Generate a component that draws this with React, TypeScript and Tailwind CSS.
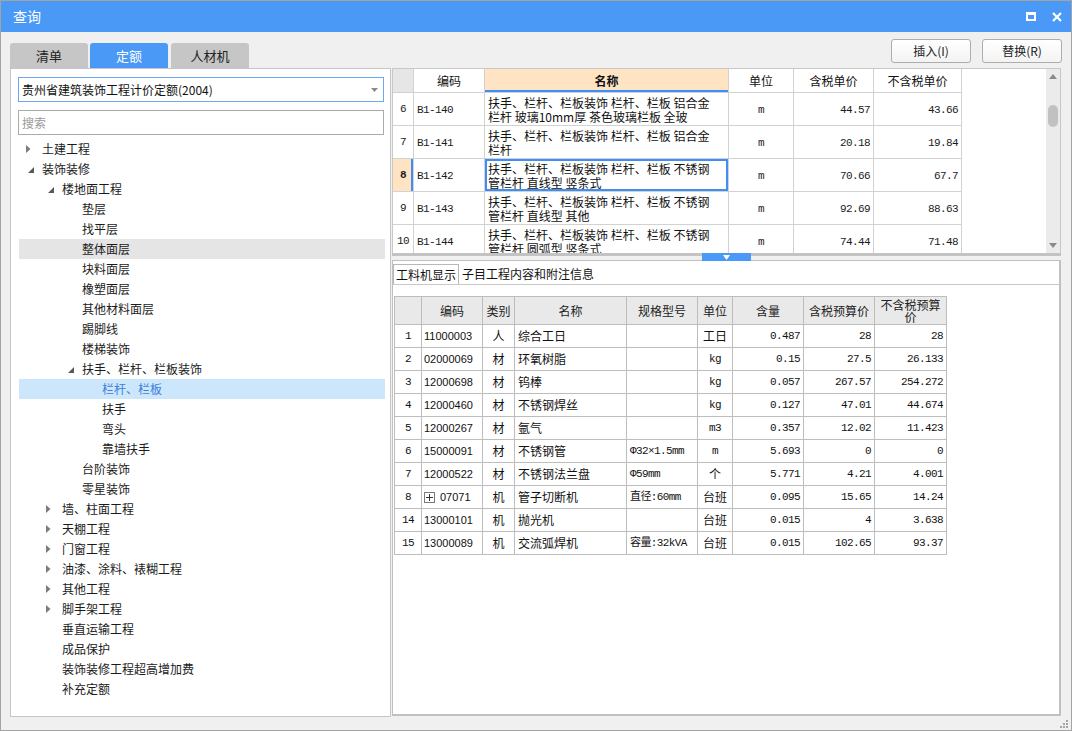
import type { ReactNode } from 'react';

// Query dialog: quota library tree on the left, quota list + resource breakdown on the right.

type TreeNode = {
  label: string;
  level: 0 | 1 | 2 | 3;
  arrow?: 'open' | 'closed';
  mark?: 'hover' | 'selected';
};

const TREE: TreeNode[] = [
  { label: '土建工程', level: 0, arrow: 'closed' },
  { label: '装饰装修', level: 0, arrow: 'open' },
  { label: '楼地面工程', level: 1, arrow: 'open' },
  { label: '垫层', level: 2 },
  { label: '找平层', level: 2 },
  { label: '整体面层', level: 2, mark: 'hover' },
  { label: '块料面层', level: 2 },
  { label: '橡塑面层', level: 2 },
  { label: '其他材料面层', level: 2 },
  { label: '踢脚线', level: 2 },
  { label: '楼梯装饰', level: 2 },
  { label: '扶手、栏杆、栏板装饰', level: 2, arrow: 'open' },
  { label: '栏杆、栏板', level: 3, mark: 'selected' },
  { label: '扶手', level: 3 },
  { label: '弯头', level: 3 },
  { label: '靠墙扶手', level: 3 },
  { label: '台阶装饰', level: 2 },
  { label: '零星装饰', level: 2 },
  { label: '墙、柱面工程', level: 1, arrow: 'closed' },
  { label: '天棚工程', level: 1, arrow: 'closed' },
  { label: '门窗工程', level: 1, arrow: 'closed' },
  { label: '油漆、涂料、裱糊工程', level: 1, arrow: 'closed' },
  { label: '其他工程', level: 1, arrow: 'closed' },
  { label: '脚手架工程', level: 1, arrow: 'closed' },
  { label: '垂直运输工程', level: 1 },
  { label: '成品保护', level: 1 },
  { label: '装饰装修工程超高增加费', level: 1 },
  { label: '补充定额', level: 1 },
];

const INDENT = ['pl-[7px]', 'pl-[27px]', 'pl-[47px]', 'pl-[67px]'];

const QUOTAS = [
  { no: '6', code: 'B1-140', name: ['扶手、栏杆、栏板装饰 栏杆、栏板 铝合金', '栏杆 玻璃10mm厚 茶色玻璃栏板 全玻'], unit: 'm', tax: '44.57', net: '43.66' },
  { no: '7', code: 'B1-141', name: ['扶手、栏杆、栏板装饰 栏杆、栏板 铝合金', '栏杆'], unit: 'm', tax: '20.18', net: '19.84' },
  { no: '8', code: 'B1-142', name: ['扶手、栏杆、栏板装饰 栏杆、栏板 不锈钢', '管栏杆 直线型 竖条式'], unit: 'm', tax: '70.66', net: '67.7', active: true },
  { no: '9', code: 'B1-143', name: ['扶手、栏杆、栏板装饰 栏杆、栏板 不锈钢', '管栏杆 直线型 其他'], unit: 'm', tax: '92.69', net: '88.63' },
  { no: '10', code: 'B1-144', name: ['扶手、栏杆、栏板装饰 栏杆、栏板 不锈钢', '管栏杆 圆弧型 竖条式'], unit: 'm', tax: '74.44', net: '71.48' },
];

const RESOURCES = [
  { no: '1', code: '11000003', kind: '人', name: '综合工日', spec: '', unit: '工日', qty: '0.487', tax: '28', net: '28' },
  { no: '2', code: '02000069', kind: '材', name: '环氧树脂', spec: '', unit: 'kg', qty: '0.15', tax: '27.5', net: '26.133' },
  { no: '3', code: '12000698', kind: '材', name: '钨棒', spec: '', unit: 'kg', qty: '0.057', tax: '267.57', net: '254.272' },
  { no: '4', code: '12000460', kind: '材', name: '不锈钢焊丝', spec: '', unit: 'kg', qty: '0.127', tax: '47.01', net: '44.674' },
  { no: '5', code: '12000267', kind: '材', name: '氩气', spec: '', unit: 'm3', qty: '0.357', tax: '12.02', net: '11.423' },
  { no: '6', code: '15000091', kind: '材', name: '不锈钢管', spec: 'Φ32×1.5mm', unit: 'm', qty: '5.693', tax: '0', net: '0' },
  { no: '7', code: '12000522', kind: '材', name: '不锈钢法兰盘', spec: 'Φ59mm', unit: '个', qty: '5.771', tax: '4.21', net: '4.001' },
  { no: '8', code: '07071', kind: '机', name: '管子切断机', spec: '直径:60mm', unit: '台班', qty: '0.095', tax: '15.65', net: '14.24', group: true },
  { no: '14', code: '13000101', kind: '机', name: '抛光机', spec: '', unit: '台班', qty: '0.015', tax: '4', net: '3.638' },
  { no: '15', code: '13000089', kind: '机', name: '交流弧焊机', spec: '容量:32kVA', unit: '台班', qty: '0.015', tax: '102.65', net: '93.37' },
];

const MONO = "[font-family:'Liberation_Mono','Noto_Sans_CJK_SC',monospace] text-[11px] tracking-[-0.6px]";

function Arrow({ kind }: { kind?: 'open' | 'closed' }): JSX.Element | null {
  if (kind === 'closed') {
    return (
      <svg width="5" height="8" viewBox="0 0 5 8">
        <path d="M0 0L4.5 4L0 8Z" fill="#7c7c7c" />
      </svg>
    );
  }
  if (kind === 'open') {
    return (
      <svg width="6" height="6" viewBox="0 0 6 6" className="ml-[2px] mt-[2px]">
        <path d="M6 0V6H0Z" fill="#595959" />
      </svg>
    );
  }
  return null;
}

function TreeRow({ node }: { node: TreeNode }): JSX.Element {
  const bg = node.mark === 'hover' ? 'bg-[#e5e5e5]' : node.mark === 'selected' ? 'bg-[#cce6fb]' : '';
  const fg = node.mark === 'selected' ? 'text-[#3b7fdc]' : 'text-[#1b1b1b]';
  return (
    <div className={`flex h-[20px] items-center ${INDENT[node.level]} ${bg}`}>
      <span className="flex w-[16px] items-center">
        <Arrow kind={node.arrow} />
      </span>
      <span className={`text-[12px] leading-[20px] whitespace-nowrap ${fg}`}>{node.label}</span>
    </div>
  );
}

function Tab({ label, active }: { label: string; active?: boolean }): JSX.Element {
  return (
    <div
      className={`flex h-[25px] w-[78px] items-center justify-center rounded-t-[3px] text-[13px] ${
        active ? 'bg-[#4a99f7] text-white' : 'bg-[#c6c6c6] text-[#222]'
      }`}
    >
      {label}
    </div>
  );
}

function Button({ children }: { children: ReactNode }): JSX.Element {
  return (
    <div className="flex h-[24px] w-[80px] items-center justify-center rounded-[3px] border border-[#adadad] bg-gradient-to-b from-white to-[#f3f3f3] text-[12px] text-[#222]">
      {children}
    </div>
  );
}

function QuotaTable(): JSX.Element {
  const th = 'flex h-[24px] items-center justify-center border-r border-b border-[#d2d2d2] text-[12px] text-[#111]';
  const td = 'h-[33px] border-r border-b border-[#d2d2d2] flex items-center';
  return (
    <div className="grid grid-cols-[21px_71px_244px_65px_80px_88px] content-start">
      <div className={`${th} bg-[#e6e6e6]`} />
      <div className={th}>编码</div>
      <div className={`${th} bg-[#ffe4c4] font-bold shadow-[inset_0_-2px_0_#3d8ef5]`}>名称</div>
      <div className={th}>单位</div>
      <div className={th}>含税单价</div>
      <div className={th}>不含税单价</div>
      {QUOTAS.map((q) => (
        <Row key={q.no}>
          <div
            className={`${td} justify-center ${MONO} ${
              q.active ? 'bg-[#ffe4c4] font-bold shadow-[inset_-2px_0_0_#3d8ef5]' : ''
            }`}
          >
            {q.no}
          </div>
          <div className={`${td} pl-[3px] pt-[3px] ${MONO}`}>{q.code}</div>
          <div
            className={`h-[33px] border-r border-b border-[#d2d2d2] flex flex-col overflow-hidden pl-[3px] pt-[3px] text-[12px] leading-[14px] text-[#111] ${
              q.active ? 'shadow-[inset_0_0_0_2px_#3d8ef5]' : ''
            }`}
          >
            {q.name.map((line) => (
              <span key={line} className="whitespace-nowrap">
                {line}
              </span>
            ))}
          </div>
          <div className={`${td} justify-center pt-[3px] ${MONO}`}>{q.unit}</div>
          <div className={`${td} justify-end pr-[3px] pt-[3px] ${MONO}`}>{q.tax}</div>
          <div className={`${td} justify-end pr-[3px] pt-[3px] ${MONO}`}>{q.net}</div>
        </Row>
      ))}
    </div>
  );
}

function Row({ children }: { children: ReactNode }): JSX.Element {
  return <>{children}</>;
}

function ResourceTable(): JSX.Element {
  const th =
    'flex h-[28px] items-center justify-center border-r border-b border-[#bdbdbd] bg-[#e9e9e9] text-center text-[12px] leading-[12px] text-[#222]';
  const td = 'flex h-[23px] items-center border-r border-b border-[#bdbdbd] text-[#111] whitespace-nowrap overflow-hidden';
  return (
    <div className="ml-[1px] grid w-max grid-cols-[27px_61px_32px_112px_71px_35px_71px_71px_72px] border-l border-t border-[#bdbdbd]">
      <div className={th} />
      <div className={th}>编码</div>
      <div className={th}>类别</div>
      <div className={th}>名称</div>
      <div className={th}>规格型号</div>
      <div className={th}>单位</div>
      <div className={th}>含量</div>
      <div className={th}>含税预算价</div>
      <div className={`${th} px-[2px]`}>不含税预算价</div>
      {RESOURCES.map((r) => (
        <Row key={r.no}>
          <div className={`${td} justify-center ${MONO}`}>{r.no}</div>
          <div className={`${td} pl-[2px] [font-family:'Liberation_Sans',sans-serif] text-[11px]`}>
            {r.group ? (
              <>
                <span className="flex h-[11px] w-[11px] items-center justify-center border border-[#7a7a7a]">
                  <svg width="7" height="7" viewBox="0 0 7 7">
                    <path d="M3.5 0V7M0 3.5H7" stroke="#333" strokeWidth="1" />
                  </svg>
                </span>
                <span className="ml-[5px]">{r.code}</span>
              </>
            ) : (
              r.code
            )}
          </div>
          <div className={`${td} justify-center text-[12px]`}>{r.kind}</div>
          <div className={`${td} pl-[3px] text-[12px]`}>{r.name}</div>
          <div className={`${td} pl-[3px] ${MONO}`}>{r.spec}</div>
          <div className={`${td} justify-center ${/[a-z]/.test(r.unit) ? MONO : 'text-[12px]'}`}>{r.unit}</div>
          <div className={`${td} justify-end pr-[3px] ${MONO}`}>{r.qty}</div>
          <div className={`${td} justify-end pr-[3px] ${MONO}`}>{r.tax}</div>
          <div className={`${td} justify-end pr-[3px] ${MONO}`}>{r.net}</div>
        </Row>
      ))}
    </div>
  );
}

function ScrollBar(): JSX.Element {
  return (
    <div className="flex w-[14px] flex-col items-center bg-[#ebebeb]">
      <svg width="8" height="5" viewBox="0 0 8 5" className="mt-[5px]">
        <path d="M0 5L4 0L8 5Z" fill="#8a8a8a" />
      </svg>
      <div className="mt-[26px] h-[22px] w-[10px] rounded-full bg-[#c1c1c1]" />
      <div className="flex-1" />
      <svg width="8" height="5" viewBox="0 0 8 5" className="mb-[5px]">
        <path d="M0 0L8 0L4 5Z" fill="#8a8a8a" />
      </svg>
    </div>
  );
}

export default function App(): JSX.Element {
  return (
    <div className="flex h-[731px] w-[1072px] flex-col overflow-hidden border border-[#a3a3a3] bg-[#f0f0f0] [font-family:'Noto_Sans_CJK_SC','Microsoft_YaHei',sans-serif] text-[#1b1b1b]">
      {/* title bar */}
      <div className="flex h-[31px] shrink-0 items-center bg-[#4a99f7] pl-[12px] pr-[9px]">
        <span className="text-[14px] text-white">查询</span>
        <div className="flex-1" />
        <svg width="10" height="9" viewBox="0 0 10 9">
          <rect x="1" y="1.5" width="8" height="6.5" fill="none" stroke="white" strokeWidth="2" />
          <rect x="0" y="0" width="10" height="3" fill="white" />
        </svg>
        <svg width="10" height="10" viewBox="0 0 10 10" className="ml-[16px]">
          <path d="M1 1L9 9M9 1L1 9" stroke="white" strokeWidth="2.2" />
        </svg>
      </div>

      {/* tabs + actions */}
      <div className="flex h-[36px] shrink-0 items-end pl-[9px] pr-[9px]">
        <div className="flex gap-[2px]">
          <Tab label="清单" />
          <Tab label="定额" active />
          <div className="ml-[1px]">
            <Tab label="人材机" />
          </div>
        </div>
        <div className="flex-1" />
        <div className="mb-[5px] flex gap-[11px] self-end">
          <Button>插入(I)</Button>
          <Button>替换(R)</Button>
        </div>
      </div>

      {/* main */}
      <div className="flex h-[649px] shrink-0 gap-[1px] pl-[9px] pr-[10px]">
        <div className="flex h-full w-[381px] flex-col border border-[#c5c5c5] bg-white pl-[7px] pr-[6px] pt-[8px]">
          <div className="flex h-[25px] items-center border border-[#6aa8ef] pl-[3px] pr-[5px]">
            <span className="text-[12px] text-[#111]">贵州省建筑装饰工程计价定额(2004)</span>
            <div className="flex-1" />
            <svg width="7" height="4" viewBox="0 0 7 4">
              <path d="M0 0H7L3.5 4Z" fill="#8a8a8a" />
            </svg>
          </div>
          <div className="mt-[8px] flex h-[25px] items-center border border-[#ababab] pl-[3px]">
            <span className="text-[12px] text-[#9a9a9a]">搜索</span>
          </div>
          <div className="ml-[1px] -mr-[1px] mt-[4px]">
            {TREE.map((n) => (
              <TreeRow key={n.label} node={n} />
            ))}
          </div>
        </div>

        <div className="flex h-full w-[669px] flex-col">
          <div className="flex h-[185px] shrink-0 overflow-hidden border-x border-t border-[#c8c8c8] bg-white">
            <div className="h-full overflow-hidden">
              <QuotaTable />
            </div>
            <div className="flex-1" />
            <ScrollBar />
          </div>

          <div className="relative h-[7px] shrink-0">
            <div className="h-[3px] bg-[#c3c3c3]" />
            <div className="absolute left-[310px] top-0 flex h-[8px] w-[49px] items-center justify-center bg-[#4a99f7]">
              <svg width="7" height="5" viewBox="0 0 7 5">
                <path d="M0 0H7L3.5 5Z" fill="white" />
              </svg>
            </div>
          </div>

          <div className="mb-[1px] flex flex-1 flex-col border border-r-2 border-b-2 border-[#c0c0c0] bg-white">
            <div className="flex h-[24px] shrink-0 items-end border-b border-[#c8c8c8]">
              <div className="flex h-[20px] items-center border border-b-0 border-[#b8b8b8] px-[2px] text-[12px] text-[#111]">
                工料机显示
              </div>
              <div className="ml-[3px] flex h-[20px] items-center text-[12px] text-[#111]">子目工程内容和附注信息</div>
            </div>
            <div className="mt-[11px]">
              <ResourceTable />
            </div>
          </div>
        </div>
      </div>

      {/* status strip with resize grip */}
      <div className="flex flex-1 items-end justify-end pb-[2px] pr-[3px]">
        <svg width="8" height="8" viewBox="0 0 8 8">
          <rect x="6" y="0" width="2" height="2" fill="#a6a6a6" />
          <rect x="3" y="3" width="2" height="2" fill="#a6a6a6" />
          <rect x="6" y="3" width="2" height="2" fill="#a6a6a6" />
          <rect x="0" y="6" width="2" height="2" fill="#a6a6a6" />
          <rect x="3" y="6" width="2" height="2" fill="#a6a6a6" />
          <rect x="6" y="6" width="2" height="2" fill="#a6a6a6" />
        </svg>
      </div>
    </div>
  );
}
